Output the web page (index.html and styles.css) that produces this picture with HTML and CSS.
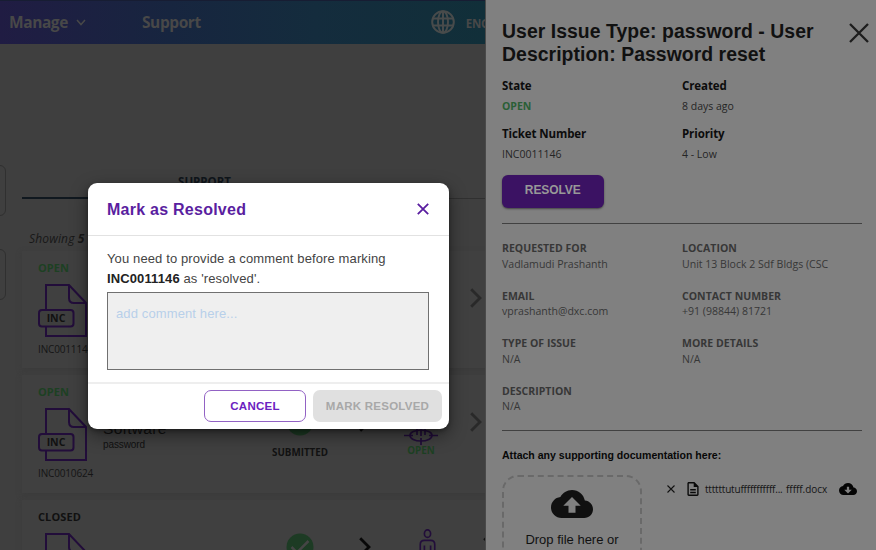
FILE: index.html
```html
<!DOCTYPE html>
<html lang="en">
<head>
<meta charset="utf-8">
<title>Support</title>
<link rel="stylesheet" href="styles.css">
</head>
<body>
<svg class="defs" aria-hidden="true">
  <symbol id="doc" viewBox="0 0 50 54">
    <path d="M8 18V1H31L48 19V52H8V43M31 1V14Q31 19 36 19H48" fill="none" stroke="#220d3a" stroke-width="2"/>
    <rect x="1" y="26" width="34.500" height="16.500" rx="3" fill="#3e3e3e" stroke="#220d3a" stroke-width="2"/>
    <path d="M8 18V26" stroke="#220d3a" stroke-width="2"/>
  </symbol>
  <symbol id="check" viewBox="0 0 28 28">
    <circle cx="14" cy="14" r="13.500" fill="#1d3b24"/>
    <path d="M5.500 14L11 19.500L22.500 8" fill="none" stroke="#454545" stroke-width="2.500"/>
  </symbol>
  <symbol id="chev" viewBox="0 0 12 20">
    <path d="M1.200 1.200L10 10L1.200 18.800" fill="none" stroke="currentColor" stroke-width="2.800"/>
  </symbol>
</svg>
<div class="app">
  <main class="page">
    <header class="nav">
      <span class="manage">Manage</span>
      <svg class="caret" viewBox="0 0 10 7"><path d="M1 1L5 5.500L9 1" fill="none" stroke="#484848" stroke-width="1.500"/></svg>
      <span class="link">Support</span>
      <svg class="globe" viewBox="0 0 24 24" fill="none" stroke="#484b4b" stroke-width="2"><circle cx="12" cy="12" r="10.800"/><ellipse cx="12" cy="12" rx="5" ry="10.800"/><path d="M12 1V23M1.600 8.500H22.400M1.600 15.500H22.400"/></svg>
      <span class="lang">ENG</span>
    </header>
    <div class="columns">
      <aside class="side"><div class="stub"></div><div class="stub"></div></aside>
      <section class="content">
        <div class="tabs"><div class="tab">SUPPORT</div></div>
        <p class="showing">Showing <b>5</b></p>
        <article class="card">
          <div class="ident"><span class="state">OPEN</span><div class="docbox"><svg><use href="#doc"/></svg><b>INC</b></div><span class="num">INC0011146</span></div>
          <svg class="chev go"><use href="#chev"/></svg>
        </article>
        <article class="card">
          <div class="ident"><span class="state">OPEN</span><div class="docbox"><svg><use href="#doc"/></svg><b>INC</b></div><span class="num">INC0010624</span></div>
          <div class="desc"><h3>Software</h3><p>password</p></div>
          <div class="step"><svg class="check"><use href="#check"/></svg><span>SUBMITTED</span></div>
          <svg class="chev next"><use href="#chev"/></svg>
          <div class="step current"><svg class="target" viewBox="0 0 34 34" fill="none" stroke="#220d3a" stroke-width="1.700"><path d="M13 10V24M17 8V25M21 10V24"/><ellipse cx="17" cy="24.500" rx="11" ry="5.500"/><path d="M0 24.500H9M25 24.500H34M17 27V34"/></svg><span>OPEN</span></div>
          <svg class="chev go"><use href="#chev"/></svg>
        </article>
        <article class="card">
          <div class="ident"><span class="state closed">CLOSED</span><div class="docbox"><svg><use href="#doc"/></svg></div></div>
          <div class="desc"></div>
          <div class="step"><svg class="check"><use href="#check"/></svg></div>
          <svg class="chev next"><use href="#chev"/></svg>
          <div class="step current"><svg class="person" viewBox="0 0 16 30" fill="none" stroke="#220d3a" stroke-width="1.600"><ellipse cx="8" cy="4.500" rx="3" ry="3.600"/><path d="M1 28V15Q1 11 5 11H11Q15 11 15 15V28M5 28V16M11 28V16"/></svg></div>
          <svg class="chev last"><use href="#chev"/></svg>
        </article>
      </section>
    </div>
  </main>
  <aside class="drawer">
    <div class="head"><h1>User Issue Type: password - User Description: Password reset</h1>
      <svg class="close" viewBox="0 0 20 20"><path d="M1 1L19 19M19 1L1 19" stroke="#1d1d1d" stroke-width="2.300"/></svg></div>
    <dl class="facts">
      <div><dt>State</dt><dd class="open">OPEN</dd></div>
      <div><dt>Created</dt><dd>8 days ago</dd></div>
      <div><dt>Ticket Number</dt><dd>INC0011146</dd></div>
      <div><dt>Priority</dt><dd>4 - Low</dd></div>
    </dl>
    <button class="resolve">RESOLVE</button>
    <dl class="details">
      <div><dt>REQUESTED FOR</dt><dd>Vadlamudi Prashanth</dd></div>
      <div><dt>LOCATION</dt><dd>Unit 13 Block 2 Sdf Bldgs (CSC</dd></div>
      <div><dt>EMAIL</dt><dd>vprashanth@dxc.com</dd></div>
      <div><dt>CONTACT NUMBER</dt><dd>+91 (98844) 81721</dd></div>
      <div><dt>TYPE OF ISSUE</dt><dd>N/A</dd></div>
      <div><dt>MORE DETAILS</dt><dd>N/A</dd></div>
      <div><dt>DESCRIPTION</dt><dd>N/A</dd></div>
    </dl>
    <h2>Attach any supporting documentation here:</h2>
    <div class="attach">
      <div class="drop">
        <svg class="up" viewBox="0 4 24 16"><path fill="#101010" d="M19.350 10.040C18.670 6.590 15.640 4 12 4 9.110 4 6.600 5.640 5.350 8.040 2.340 8.360 0 10.910 0 14c0 3.310 2.690 6 6 6h13c2.760 0 5-2.240 5-5 0-2.640-2.050-4.780-4.650-4.960zM14 13v4h-4v-4H7l5-5 5 5h-3z"/></svg>
        <span>Drop file here or</span>
      </div>
      <div class="file">
        <svg class="rm" viewBox="0 0 8 8"><path d="M.5 .5L7.500 7.500M7.500 .5L.5 7.500" stroke="#111" stroke-width="1.100"/></svg>
        <svg class="page-icon" viewBox="4 2 16 20"><path fill="#0a0a0a" d="M8 16h8v2H8zm0-4h8v2H8zm6-10H6c-1.100 0-2 .9-2 2v16c0 1.100.89 2 1.990 2H18c1.100 0 2-.9 2-2V8l-6-6zm4 18H6V4h7v5h5v11z"/></svg>
        <span class="fname">ttttttutufffffffffff...</span><span class="ext">fffff.docx</span>
        <svg class="down" viewBox="0 4 24 16"><path fill="#050505" d="M19.350 10.040C18.670 6.590 15.640 4 12 4 9.110 4 6.600 5.640 5.350 8.040 2.340 8.360 0 10.910 0 14c0 3.310 2.690 6 6 6h13c2.760 0 5-2.240 5-5 0-2.640-2.050-4.780-4.650-4.960zM10.500 9h3v4H17l-5 5-5-5h3.500z"/></svg>
      </div>
    </div>
  </aside>
  <div class="modal" role="dialog">
    <div class="mhead"><h2>Mark as Resolved</h2><svg viewBox="0 0 12 12"><path d="M.8 .8L11.200 11.200M11.200 .8L.8 11.200" stroke="#5a1ea0" stroke-width="1.800"/></svg></div>
    <div class="mbody"><p>You need to provide a comment before marking<br><b>INC0011146</b> as 'resolved'.</p><textarea placeholder="add comment here..."></textarea></div>
    <div class="mfoot"><button class="cancel">CANCEL</button><button class="mark" disabled>MARK RESOLVED</button></div>
  </div>
</div>
</body>
</html>
```
FILE: styles.css
```css
* { box-sizing: border-box; }
body, h1, h2, h3, p, dl, dd { margin: 0; }
body { overflow: hidden; font-family: "Open Sans", sans-serif; background: #404040; }
button { font-family: "Liberation Sans", sans-serif; padding: 0; }
svg { display: block; flex: none; }
.defs { position: absolute; width: 0; height: 0; }
.app { position: relative; display: flex; width: 876px; height: 550px; overflow: hidden; }

.page { width: 486px; overflow: hidden; background: #3f3f3f; border-right: 1px solid #4a4a4a; }
.nav { display: flex; align-items: center; height: 44px; padding-left: 9px; background: linear-gradient(90deg, #201c43, #17253f 35%, #142c3d 65%, #112f39); color: #484848; font-weight: 700; white-space: nowrap; border-top: 1px solid #171d33; }
.manage, .link { font-size: 15.500px; letter-spacing: -.42px; width: 58px; margin-top: -2px; }
.caret { width: 10px; height: 7px; margin-left: 9px; }
.link { width: 59px; margin-left: 56px; }
.globe { width: 24px; height: 24px; margin-left: 230px; margin-top: -1px; }
.lang { margin: 1px 0 0 11px; font-size: 11.500px; letter-spacing: -.3px; }
.columns { display: flex; height: 506px; }
.side { width: 22px; padding-top: 121px; flex: none; }
.stub { width: 15px; height: 51px; margin: 0 0 33px -9.500px; border: 1px solid #303030; border-radius: 6px; }
.content { flex: none; width: 480px; padding-top: 130px; }
.tabs { height: 25px; border-bottom: 1px solid #303030; }
.tab { width: 365px; height: 25px; border-bottom: 2px solid #10181f; text-align: center; font-size: 11.500px; line-height: 15px; font-weight: 700; color: #0f151b; }
.showing { margin: 31px 0 0 7px; height: 21px; font-size: 12px; line-height: 18px; font-style: italic; color: #181818; letter-spacing: .15px; }
.card { display: flex; height: 117.300px; margin-bottom: 7px; padding-left: 16px; background: #404040; box-shadow: 0 2px 5px #3b3b3b; }
.ident { width: 65px; padding-top: 9px; flex: none; }
.state { display: block; font-size: 11px; line-height: 16px; font-weight: 700; color: #1d4023; letter-spacing: .1px; }
.closed { color: #111; }
.docbox { position: relative; width: 50px; height: 54px; margin-top: 8px; }
.docbox svg { width: 50px; height: 54px; }
.docbox b { position: absolute; left: 1px; top: 27px; width: 34px; text-align: center; font-size: 10.500px; line-height: 15px; color: #111; }
.num { display: block; margin-top: 4px; font-size: 10px; line-height: 15px; color: #151515; letter-spacing: -.15px; }
.desc { width: 165px; flex: none; padding-top: 44px; color: #111; font-family: "Liberation Sans", sans-serif; }
.desc h3 { font-size: 15.500px; line-height: 20px; font-weight: 400; letter-spacing: .3px; }
.desc p { font-size: 10px; line-height: 12px; letter-spacing: -.1px; }
.step { display: flex; flex-direction: column; align-items: center; width: 64px; padding-top: 33px; flex: none; font-size: 9.800px; line-height: 14px; font-weight: 700; color: #121212; }
.check { width: 28px; height: 28px; }
.step span { margin-top: 10px; }
.chev { width: 12px; height: 20px; flex: none; }
.next { margin: 37px 0 0 27px; color: #080808; }
.current { margin-left: 18px; padding-top: 36px; color: #1d4023; }
.target { width: 34px; height: 34px; }
.step.current span { margin-top: 0; line-height: 12px; }
.person { width: 17px; height: 31px; margin: -7px -12px 0 0; }
.card .go { margin: 37px 0 0 17px; color: #292929; }
.card .ident + .go { margin-left: 367px; }
.card .last { margin: 37px 0 0 30px; color: #111; }

.drawer { width: 390px; height: 550px; padding: 20px 14px 0 16px; background: #808080; overflow: hidden; flex: none; }
.head { display: flex; justify-content: space-between; }
.head h1 { width: 330px; font: 700 19.400px/23px "Liberation Sans", sans-serif; color: #111; letter-spacing: .05px; }
.close { width: 20px; height: 20px; margin: 3px -7px 0 0; }
.facts { display: grid; grid-template-columns: 180px 180px; grid-auto-rows: 48px; margin-top: 10px; }
.facts dt { font-size: 11.500px; line-height: 20px; font-weight: 700; letter-spacing: -.1px; color: #0c0c0c; }
.facts dd { font-size: 10.500px; line-height: 20px; color: #252525; }
.facts .open { color: #2a5f36; font-weight: 700; }
.resolve { display: block; width: 101.500px; height: 33px; margin-top: 2.500px; padding-bottom: 2px; border: 0; border-radius: 6px; background: #3b1263; color: #989898; font-size: 12px; font-weight: 700; letter-spacing: -.1px; box-shadow: 0 1px 2px #444; }
.details { display: grid; grid-template-columns: 180px 180px; grid-auto-rows: 47.500px; height: 208px; margin-top: 15.500px; padding-top: 16px; border: solid #414141; border-width: 1px 0; }
.details dt { font-size: 10.500px; line-height: 16px; font-weight: 700; letter-spacing: .03px; color: #373737; white-space: nowrap; }
.details dd { font-size: 10.550px; line-height: 16px; color: #373737; white-space: nowrap; margin-top: -.5px; }
.drawer > h2 { margin-top: 17px; font: 700 10.550px/15px "Liberation Sans", sans-serif; color: #080808; }
.attach { display: flex; margin-top: 12px; }
.drop { display: flex; flex-direction: column; align-items: center; width: 140px; height: 130px; padding-top: 13px; border: 2px dashed #696969; border-radius: 16px; font: 13px/16px "Liberation Sans", sans-serif; color: #111; }
.up { width: 42px; height: 28px; }
.drop span { margin-top: 14px; }
.file { display: flex; align-items: center; height: 20px; margin: 4px 0 0 25px; font-size: 10px; color: #151515; white-space: nowrap; }
.rm { width: 8px; height: 8px; }
.page-icon { width: 12px; height: 14px; margin-left: 12px; }
.fname { width: 77px; margin-left: 6px; letter-spacing: -.2px; }
.ext { width: 41px; margin-left: 4px; letter-spacing: -.05px; }
.down { width: 18px; height: 12px; margin-left: 12px; }

.modal { position: absolute; left: 88px; top: 183px; width: 361px; height: 246px; background: #fff; border-radius: 9px; box-shadow: 0 6px 18px rgba(0,0,0,.45), 0 2px 4px rgba(0,0,0,.3); font-family: "Liberation Sans", sans-serif; clip-path: inset(-60px -36.500px -60px -60px); }
.mhead { display: flex; justify-content: space-between; align-items: center; height: 53px; padding: 0 20px 0 19px; border-bottom: 1px solid #e2e2e2; }
.mhead h2 { font-size: 16px; color: #5a1ea0; letter-spacing: .25px; padding-top: 1px; }
.mhead svg { width: 12px; height: 12px; }
.mbody { height: 148px; padding: 13px 20px 0 19px; border-bottom: 2px solid #eee; }
.mbody p { height: 43px; font-size: 13px; line-height: 19.500px; color: #444; letter-spacing: .12px; }
.mbody b { color: #222; }
.mbody textarea { display: block; width: 322px; height: 78px; padding: 12px 8px; border: 1px solid #707070; border-radius: 0; background: #efefef; resize: none; font: 13px/18px "Liberation Sans", sans-serif; letter-spacing: .12px; }
.mbody textarea::placeholder { color: #b8d0ea; }
.mfoot { display: flex; justify-content: flex-end; gap: 7px; padding: 6px 7px 0; }
.mfoot button { height: 32px; border-radius: 7px; font-size: 11.500px; font-weight: 700; letter-spacing: .25px; }
.mfoot .cancel { width: 102px; border: 1px solid #9262c4; background: #fff; color: #6b21c0; }
.mfoot .mark { width: 129px; border: 0; background: #e0e0e0; color: #a8a8a8; }
```
